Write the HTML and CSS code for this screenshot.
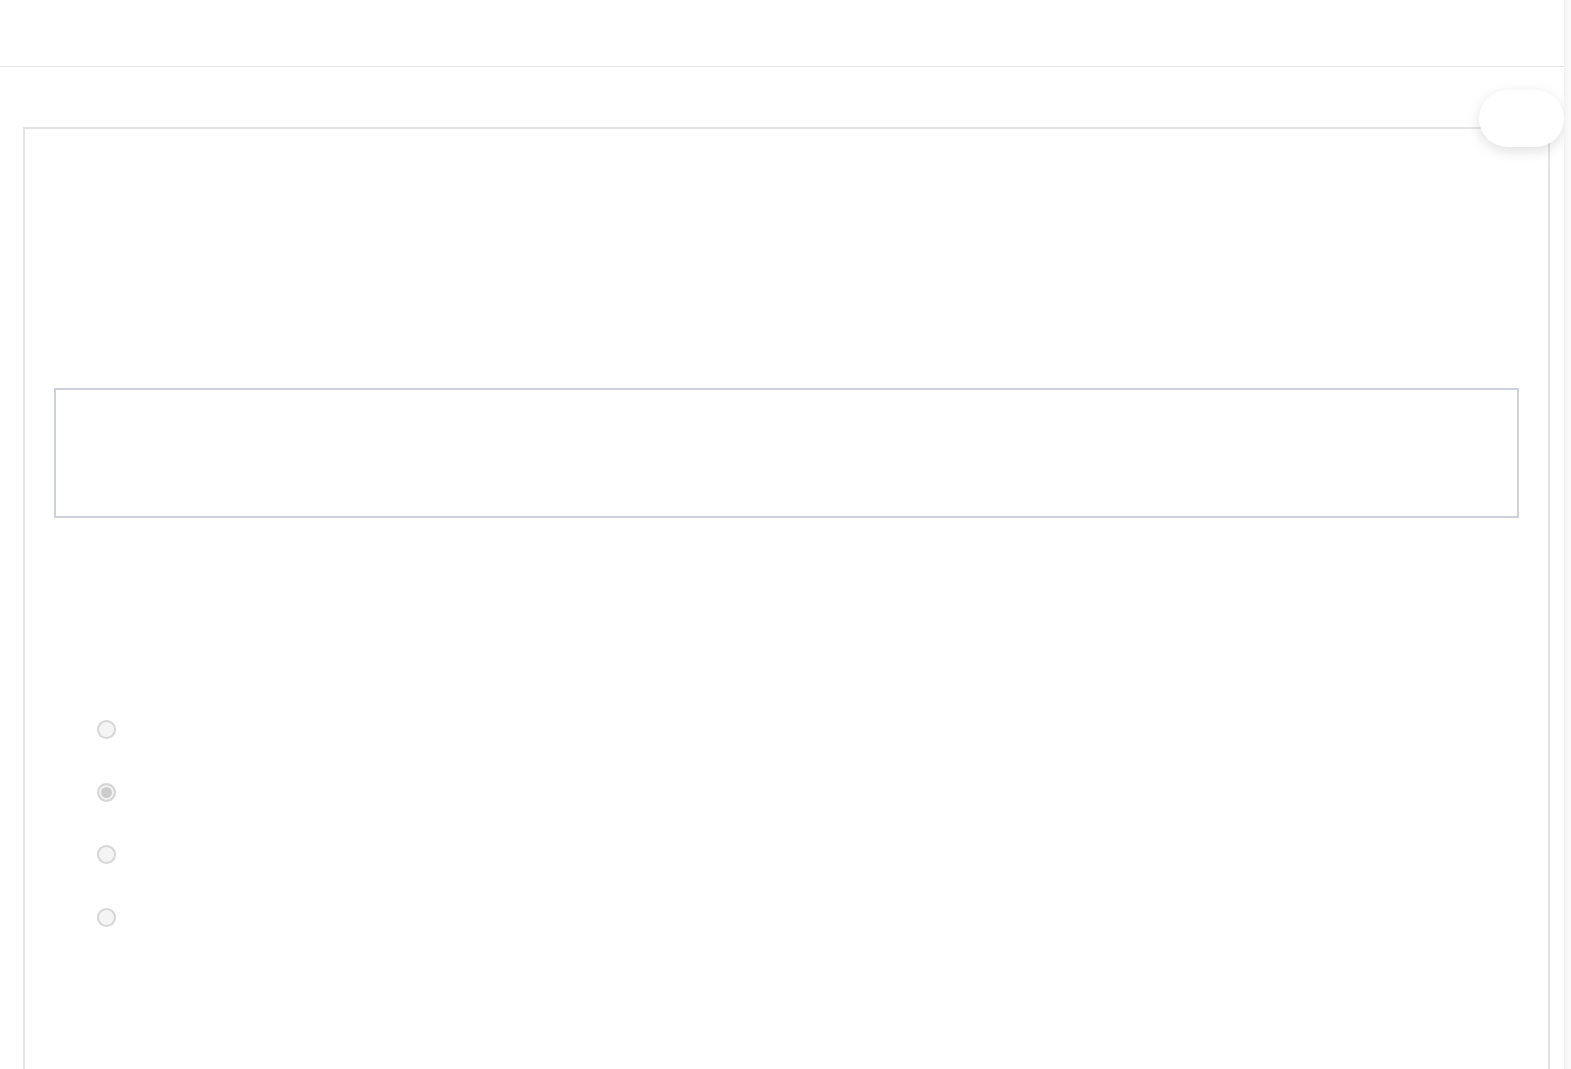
FILE: index.html
```html
<!DOCTYPE html>
<html>
<head>
  <title>Question</title>
  <link rel="stylesheet" href="styles.css">
</head>
<body>
<div id="topbar"></div>
<div id="page">
  <div id="card">
    <div id="prompt"></div>
    <ul id="choices">
      <li><input type="radio" name="answer" disabled /></li>
      <li><input type="radio" name="answer" checked disabled /></li>
      <li><input type="radio" name="answer" disabled /></li>
      <li><input type="radio" name="answer" disabled /></li>
    </ul>
  </div>
</div>
<div id="floatBtn"></div>
<div id="sideEdge"></div>
</body>
</html>
```

FILE: styles.css
```css
body {
  margin: 0;
  padding: 0;
  background: #fff;
  font-family: "Liberation Sans", Arial, sans-serif;
  overflow: hidden;
}
#topbar {
  height: 66px;
  border-bottom: 1px solid #e6e6e6;
  margin-right: 4px;
}
#page {
  padding: 60px 21px 0 23px;
}
#card {
  border: 2px solid #e4e4e4;
  border-bottom: none;
  height: 942px;
  padding: 259px 29px 0 29px;
  box-sizing: border-box;
}
#prompt {
  height: 126px;
  border: 2px solid #cdd1d9;
}
#choices {
  list-style: none;
  margin: 0;
  padding: 202px 0 0 43px;
}
#choices li {
  height: 19px;
  margin-bottom: 44px;
}
#choices li:nth-child(2) {
  margin-bottom: 43px;
}
#choices input {
  -webkit-appearance: none;
  appearance: none;
  margin: 0;
  width: 19px;
  height: 19px;
  border: 2px solid #d6d6d6;
  border-radius: 50%;
  background: #f4f4f4;
  box-sizing: border-box;
}
#choices input:checked {
  background: #cccccc;
  box-shadow: inset 0 0 0 2px #f4f4f4;
}
#floatBtn {
  position: absolute;
  top: 90px;
  right: 7px;
  width: 85px;
  height: 57px;
  border-radius: 29px;
  background: #fff;
  box-shadow: 0 4px 14px rgba(0, 0, 0, 0.13);
}
#sideEdge {
  position: fixed;
  top: 0;
  right: 0;
  bottom: 0;
  width: 6px;
  border-left: 1px solid #f1f1f1;
  background: linear-gradient(to right, #f5f5f5, #fbfbfb);
}
```
